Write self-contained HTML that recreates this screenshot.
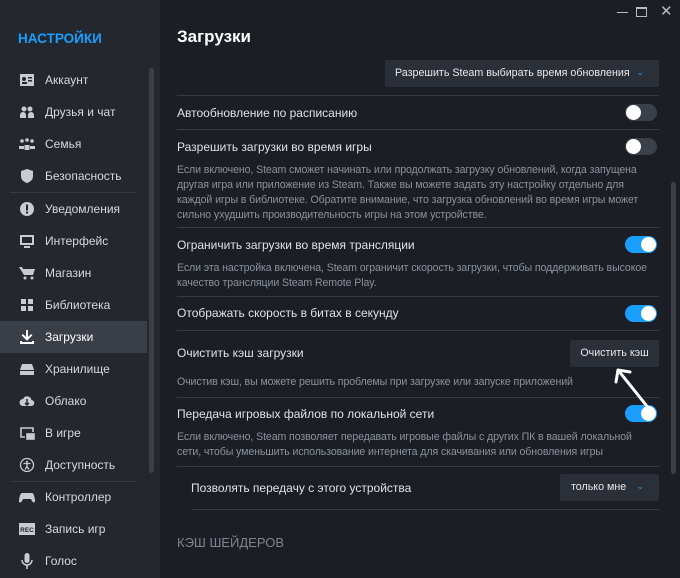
<!DOCTYPE html>
<html><head><meta charset="utf-8"><style>
*{margin:0;padding:0;box-sizing:border-box}
body{width:680px;height:578px;overflow:hidden;background:#1b1e25;font-family:"Liberation Sans",sans-serif;position:relative}
.sb{position:absolute;left:0;top:0;width:160px;height:578px;background:#24272e}
.a{position:absolute}
.it{position:absolute;left:0;width:147px;height:32px;color:#d6d9de;font-size:12px;line-height:32px;padding-left:45px}
.it svg{position:absolute;left:19px;top:8px}
.sep{position:absolute;background:#353943;height:1px}
.lbl{position:absolute;left:177px;color:#dfe2e6;font-size:12px}
.desc{position:absolute;left:177px;color:#8b929b;font-size:10.6px;line-height:15px;width:476px;letter-spacing:-0.1px}
.tg{position:absolute;left:625px;width:32px;height:17px;border-radius:9px;background:#3a3f48}
.tg::after{content:"";position:absolute;top:1px;left:1px;width:15px;height:15px;border-radius:50%;background:#fff}
.tg.on{background:#1a9fff}.tg.on::after{left:16px}
.dd{position:absolute;background:#2b2f37;color:#e6e8eb;font-size:10.7px;border-radius:2px;white-space:nowrap}
.dd i{position:absolute;right:15px;top:0;font-style:normal;color:#1a9fff;font-size:9px;line-height:24px}
</style></head><body>
<div class="sb">
<div class="a" style="left:18px;top:31px;color:#1a9fff;font-weight:bold;font-size:13.5px">НАСТРОЙКИ</div>
<div class="a" style="left:149px;top:68px;width:5px;height:405px;border-radius:3px;background:#3b3f48"></div>
<div class="it" style="top:64px"><svg width="16" height="16"><rect x="1" y="2" width="14" height="12" fill="#c8ccd2"/><circle cx="5" cy="7" r="2" fill="#24272e"/><rect x="3" y="10" width="5" height="2" fill="#24272e"/><rect x="9" y="5" width="4" height="1.5" fill="#24272e"/><rect x="9" y="8" width="4" height="1.5" fill="#24272e"/></svg>Аккаунт</div>
<div class="it" style="top:96px"><svg width="16" height="16" fill="#c8ccd2"><circle cx="5" cy="5" r="2.5"/><circle cx="11" cy="5" r="2.5"/><path d="M1 14v-3a3 3 0 0 1 6 0v3zM9 14v-3a3 3 0 0 1 6 0v3z"/></svg>Друзья и чат</div>
<div class="it" style="top:128px"><svg width="16" height="16" fill="#c8ccd2"><circle cx="3" cy="5" r="1.8"/><circle cx="8" cy="4" r="1.8"/><circle cx="13" cy="5" r="1.8"/><path d="M0 13v-3h5v3zM5.5 14v-5h5v5zM11 13v-3h5v3z"/></svg>Семья</div>
<div class="it" style="top:160px"><svg width="16" height="16" fill="#c8ccd2"><path d="M8 1l6 2v5c0 4-3 6-6 7-3-1-6-3-6-7V3z"/></svg>Безопасность</div>
<div class="sep" style="left:10px;top:192px;width:127px"></div>
<div class="it" style="top:193px"><svg width="16" height="16"><circle cx="8" cy="8" r="7" fill="#c8ccd2"/><rect x="7" y="3.5" width="2" height="6" fill="#24272e"/><rect x="7" y="10.5" width="2" height="2" fill="#24272e"/></svg>Уведомления</div>
<div class="it" style="top:225px"><svg width="16" height="16" fill="#c8ccd2"><path d="M1 2h14v10H1zM3 4v6h10V4zM5 13h6v2H5z"/></svg>Интерфейс</div>
<div class="it" style="top:257px"><svg width="16" height="16" fill="#c8ccd2"><path d="M0 2h3l1 2h12l-2 6H5z"/><circle cx="6" cy="13" r="1.5"/><circle cx="13" cy="13" r="1.5"/></svg>Магазин</div>
<div class="it" style="top:289px"><svg width="16" height="16" fill="#c8ccd2"><rect x="2" y="2" width="5" height="5"/><rect x="9" y="2" width="5" height="5"/><rect x="2" y="9" width="5" height="5"/><rect x="9" y="9" width="5" height="5"/></svg>Библиотека</div>
<div class="it" style="top:321px;background:#3a3e47;color:#fff"><svg width="16" height="16" fill="#fff"><path d="M7 1h2v7l3-3 1.4 1.4L8 11.8 2.6 6.4 4 5l3 3zM1 12h2v1h10v-1h2v3H1z"/></svg>Загрузки</div>
<div class="it" style="top:353px"><svg width="16" height="16" fill="#c8ccd2"><path d="M3 3h10l2 6H1zM1 10h14v4H1z"/></svg>Хранилище</div>
<div class="it" style="top:385px"><svg width="16" height="16"><path d="M4 13a3.5 3.5 0 0 1 0-7 4.5 4.5 0 0 1 8.5 1A3 3 0 0 1 12 13z" fill="#c8ccd2"/><path d="M8 6v6M6 10l2 2 2-2" stroke="#24272e" stroke-width="1.5" fill="none"/></svg>Облако</div>
<div class="it" style="top:417px"><svg width="16" height="16" fill="none" stroke="#c8ccd2" stroke-width="1.6"><path d="M6 12H2V3h12v4"/><rect x="8" y="9" width="7" height="5" fill="#c8ccd2"/></svg>В игре</div>
<div class="it" style="top:449px"><svg width="16" height="16"><circle cx="8" cy="8" r="6.5" fill="none" stroke="#c8ccd2" stroke-width="1.3"/><circle cx="8" cy="4.8" r="1.1" fill="#c8ccd2"/><path d="M4.5 6.5h7M8 6.5v3l-2 3M8 9.5l2 3" stroke="#c8ccd2" stroke-width="1.3" fill="none"/></svg>Доступность</div>
<div class="sep" style="left:10px;top:481px;width:127px"></div>
<div class="it" style="top:481px"><svg width="16" height="16" fill="#c8ccd2"><path d="M3 4h10c2 0 3 6 3 8s-2 2-3 0l-1-2H4l-1 2c-1 2-3 2-3 0s1-8 3-8z"/></svg>Контроллер</div>
<div class="it" style="top:513px"><svg width="16" height="16"><rect x="0" y="2" width="16" height="12" fill="#c8ccd2"/><text x="8" y="11" font-size="6.5" font-family="Liberation Sans" font-weight="bold" text-anchor="middle" fill="#24272e">REC</text></svg>Запись игр</div>
<div class="it" style="top:545px"><svg width="16" height="16" fill="#c8ccd2"><rect x="5.5" y="0" width="5" height="10" rx="2.5"/><path d="M3 7a5 5 0 0 0 10 0" stroke="#c8ccd2" stroke-width="1.5" fill="none"/><rect x="7.2" y="12" width="1.6" height="4"/></svg>Голос</div>
</div>

<div class="a" style="left:617px;top:12px;width:11px;height:1.3px;background:#b8bcc2"></div>
<div class="a" style="left:636px;top:7px;width:11px;height:10px;border:1.3px solid #b8bcc2;border-top-width:2px"></div>
<div class="a" style="left:660px;top:2px;color:#b8bcc2;font-size:15px">✕</div>

<div class="a" style="left:177px;top:27px;color:#fff;font-weight:bold;font-size:17px">Загрузки</div>
<div class="dd" style="left:385px;top:60px;width:274px;height:27px;line-height:27px;padding-left:10px">Разрешить Steam выбирать время обновления<i>⌄</i></div>
<div class="a" style="left:671px;top:182px;width:5px;height:292px;border-radius:3px;background:#3b3f48"></div>

<div class="sep" style="left:177px;top:95px;width:482px"></div>
<div class="lbl" style="top:106px">Автообновление по расписанию</div><div class="tg" style="top:104px"></div>
<div class="sep" style="left:177px;top:129px;width:482px"></div>
<div class="lbl" style="top:140px">Разрешить загрузки во время игры</div><div class="tg" style="top:138px"></div>
<div class="desc" style="top:163px">Если включено, Steam сможет начинать или продолжать загрузку обновлений, когда запущена другая игра или приложение из Steam. Также вы можете задать эту настройку отдельно для каждой игры в библиотеке. Обратите внимание, что загрузка обновлений во время игры может сильно ухудшить производительность игры на этом устройстве.</div>
<div class="sep" style="left:177px;top:227px;width:482px"></div>
<div class="lbl" style="top:238px">Ограничить загрузки во время трансляции</div><div class="tg on" style="top:236px"></div>
<div class="desc" style="top:261px">Если эта настройка включена, Steam ограничит скорость загрузки, чтобы поддерживать высокое качество трансляции Steam Remote Play.</div>
<div class="sep" style="left:177px;top:296px;width:482px"></div>
<div class="lbl" style="top:306px">Отображать скорость в битах в секунду</div><div class="tg on" style="top:305px"></div>
<div class="sep" style="left:177px;top:330px;width:482px"></div>
<div class="lbl" style="top:346px">Очистить кэш загрузки</div>
<div class="dd" style="left:570px;top:340px;width:89px;height:27px;line-height:27px;text-align:center">Очистить кэш</div>
<div class="desc" style="top:375px">Очистив кэш, вы можете решить проблемы при загрузке или запуске приложений</div>
<div class="sep" style="left:177px;top:397px;width:482px"></div>
<div class="lbl" style="top:407px">Передача игровых файлов по локальной сети</div><div class="tg on" style="top:405px"></div>
<div class="desc" style="top:430px">Если включено, Steam позволяет передавать игровые файлы с других ПК в вашей локальной сети, чтобы уменьшить использование интернета для скачивания или обновления игры</div>
<div class="sep" style="left:177px;top:466px;width:482px"></div>
<div class="lbl" style="left:191px;top:481px">Позволять передачу с этого устройства</div>
<div class="dd" style="left:560px;top:474px;width:99px;height:27px;line-height:27px;padding-left:11px">только мне<i>⌄</i></div>
<div class="sep" style="left:191px;top:509px;width:468px"></div>
<div class="a" style="left:177px;top:535px;color:#7d848d;font-size:13px">КЭШ ШЕЙДЕРОВ</div>
<svg class="a" style="left:600px;top:360px" width="60" height="60"><path d="M50 50 L18 10 M18 10 L16 22 M18 10 L30 12" stroke="#fff" stroke-width="3" fill="none" stroke-linecap="round"/></svg>
</body></html>
